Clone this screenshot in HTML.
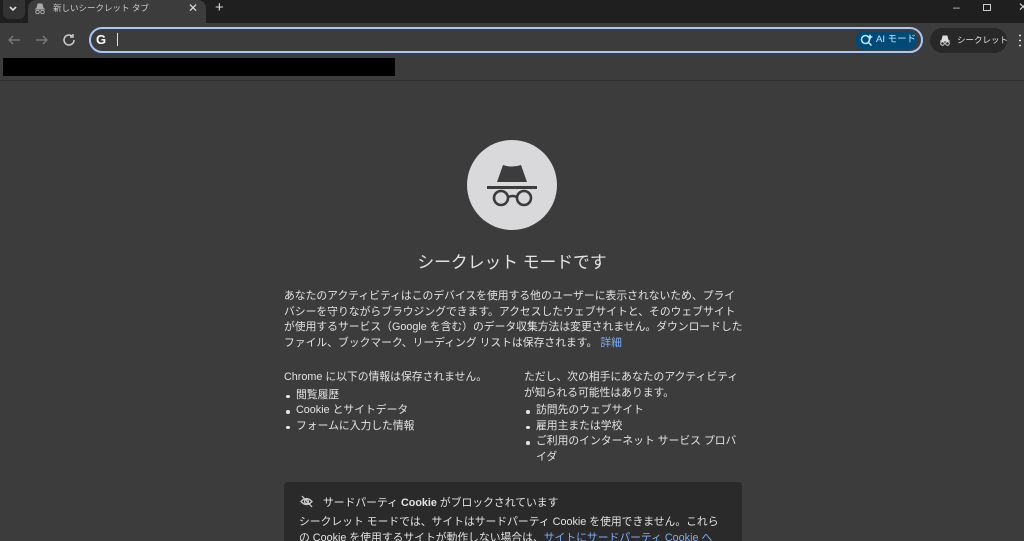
<!DOCTYPE html>
<html style="overflow:hidden;height:541px"><head><meta charset="utf-8"><style>
*{margin:0;padding:0;box-sizing:border-box}
body{width:1024px;height:541px;overflow:hidden;background:#3c3c3c;font-family:"Liberation Sans","Noto Sans CJK JP",sans-serif;color:#e3e3e3;position:relative}
.abs{position:absolute;white-space:nowrap}
.tabs{left:0;top:0;width:1024px;height:23px;background:#1f1f1f}
.tab{left:28px;top:0;width:178px;height:24px;background:#3c3c3c;border-radius:8px 8px 0 0}
.toolbar{left:0;top:23px;width:1024px;height:35px;background:#3c3c3c}
.omni{left:89px;top:27px;width:834px;height:26px;border:2px solid #a8c7fa;border-radius:14px;background:#3c3c3c}
.ai{left:855px;top:31px;width:62px;height:18px;background:#004a77;border-radius:9px;color:#c2e7ff;font-size:9.5px;line-height:18px;padding-left:21px}
.inc{left:930px;top:28px;width:77px;height:25px;background:#282828;border-radius:13px;font-size:8.5px;line-height:25px;padding-left:27px;color:#e3e3e3}
p{font-size:10.8px;line-height:15.6px}
ul{list-style:none}
li{font-size:10.8px;line-height:15.6px;position:relative;padding-left:12px;white-space:nowrap}
li:before{content:"";position:absolute;left:2px;top:7px;width:3.5px;height:3.5px;border-radius:50%;background:#e3e3e3}
a{color:#7cacf8;text-decoration:none}
</style></head><body>
<div class="abs tabs"></div>
<div class="abs" style="left:3px;top:0;width:22px;height:19px;background:#333;border-radius:0 0 6px 6px"></div>
<svg class="abs" style="left:8px;top:5px" width="10" height="8"><path d="M2 2l3 3 3-3" stroke="#ddd" stroke-width="1.6" fill="none"/></svg>
<div class="abs tab"></div>
<svg class="abs" style="left:34px;top:3px" width="12" height="12"><path d="M3 5l1-4h4l1 4z M1 6h10" fill="#aaa" stroke="#aaa"/><circle cx="3.5" cy="9" r="1.8" fill="none" stroke="#aaa"/><circle cx="8.5" cy="9" r="1.8" fill="none" stroke="#aaa"/></svg>
<div class="abs" style="left:53px;top:2px;font-size:8.5px;color:#ccc">新しいシークレット タブ</div>
<div class="abs" style="left:188px;top:1px;font-size:12px;color:#ddd">✕</div>
<div class="abs" style="left:215px;top:-1px;font-size:15px;color:#ddd">+</div>
<div class="abs" style="left:953px;top:0;font-size:12px;color:#ccc">–</div>
<div class="abs" style="left:983px;top:4px;width:8px;height:7px;border:1px solid #ccc"></div>
<div class="abs" style="left:1018px;top:0;font-size:12px;color:#ccc">✕</div>
<div class="abs toolbar"></div>
<svg class="abs" style="left:7px;top:33px" width="70" height="14"><path d="M13 7H2M6 3L2 7l4 4" stroke="#777" stroke-width="1.4" fill="none"/><path d="M29 7h11M36 3l4 4-4 4" stroke="#777" stroke-width="1.4" fill="none"/><path d="M67 7a5 5 0 1 1-2-4" stroke="#ccc" stroke-width="1.5" fill="none"/><path d="M66 1v3h-3" stroke="#ccc" stroke-width="1.5" fill="none"/></svg>
<div class="abs omni"></div>
<div class="abs" style="left:96px;top:32px;font-size:13px;font-weight:bold;color:#fff">G</div>
<div class="abs" style="left:117px;top:33px;width:1px;height:13px;background:#ddd"></div>
<div class="abs ai">AI モード</div>
<svg class="abs" style="left:860px;top:33px" width="14" height="14"><circle cx="5.5" cy="6.5" r="4" stroke="#c2e7ff" stroke-width="1.5" fill="none"/><path d="M8.5 9.5l3 3" stroke="#c2e7ff" stroke-width="1.5"/><path d="M10 1l1 2 2 1-2 1-1 2-1-2-2-1 2-1z" fill="#c2e7ff"/></svg>
<div class="abs inc">シークレット</div>
<svg class="abs" style="left:939px;top:35px" width="12" height="11"><path d="M3 5l1-4h4l1 4z M1 6h10" fill="#ddd" stroke="#ddd"/><circle cx="3.5" cy="8.5" r="1.8" fill="none" stroke="#ddd"/><circle cx="8.5" cy="8.5" r="1.8" fill="none" stroke="#ddd"/></svg>
<div class="abs" style="left:1019px;top:33px;width:2px;height:14px;background:radial-gradient(circle,#ddd 1px,transparent 1px) 0 0/2px 5px"></div>
<div class="abs" style="left:3px;top:58px;width:392px;height:18px;background:#000"></div>
<div class="abs" style="left:0;top:80px;width:1024px;height:1px;background:#333"></div>
<svg class="abs" style="left:467px;top:140px" width="90" height="90"><circle cx="45" cy="45" r="45" fill="#d9d9db"/><path d="M30 42l6-17q9 3 18 0l6 17z" fill="#3c3c3c"/><rect x="20" y="46" width="50" height="3" fill="#3c3c3c"/><circle cx="34" cy="58" r="7" fill="none" stroke="#3c3c3c" stroke-width="2.6"/><circle cx="57" cy="58" r="7" fill="none" stroke="#3c3c3c" stroke-width="2.6"/><path d="M41 57q4.5-2 9 0" stroke="#3c3c3c" stroke-width="2.4" fill="none"/></svg>
<div class="abs" style="left:0;width:1024px;top:249px;text-align:center;font-size:16.8px;color:#e3e3e3">シークレット モードです</div>
<p class="abs" style="left:284px;top:289px">あなたのアクティビティはこのデバイスを使用する他のユーザーに表示されないため、プライ<br>バシーを守りながらブラウジングできます。アクセスしたウェブサイトと、そのウェブサイト<br>が使用するサービス（Google を含む）のデータ収集方法は変更されません。ダウンロードした<br>ファイル、ブックマーク、リーディング リストは保存されます。 <a>詳細</a></p>
<div class="abs" style="left:284px;top:370px;width:230px"><p>Chrome に以下の情報は保存されません。</p><ul style="margin-top:2px"><li>閲覧履歴</li><li>Cookie とサイトデータ</li><li>フォームに入力した情報</li></ul></div>
<div class="abs" style="left:524px;top:370px;width:218px"><p>ただし、次の相手にあなたのアクティビティ<br>が知られる可能性はあります。</p><ul style="margin-top:2px"><li>訪問先のウェブサイト</li><li>雇用主または学校</li><li>ご利用のインターネット サービス プロバ<br>イダ</li></ul></div>
<div class="abs" style="left:284px;top:482px;width:458px;height:70px;background:#2a2a2a;border-radius:4px"></div>
<svg class="abs" style="left:300px;top:495px" width="13" height="13"><path d="M1 6.5q5.5-6 11 0q-5.5 6-11 0z" fill="none" stroke="#ccc" stroke-width="1.3"/><circle cx="6.5" cy="6.5" r="2" fill="none" stroke="#ccc" stroke-width="1.2"/><path d="M2 1l10 11" stroke="#ccc" stroke-width="1.3"/></svg>
<div class="abs" style="left:323px;top:494px;font-size:10.8px">サードパーティ <b>Cookie</b> がブロックされています</div>
<p class="abs" style="left:299px;top:515px">シークレット モードでは、サイトはサードパーティ Cookie を使用できません。これら<br>の Cookie を使用するサイトが動作しない場合は、<a>サイトにサードパーティ Cookie へ</a></p>
</body></html>
